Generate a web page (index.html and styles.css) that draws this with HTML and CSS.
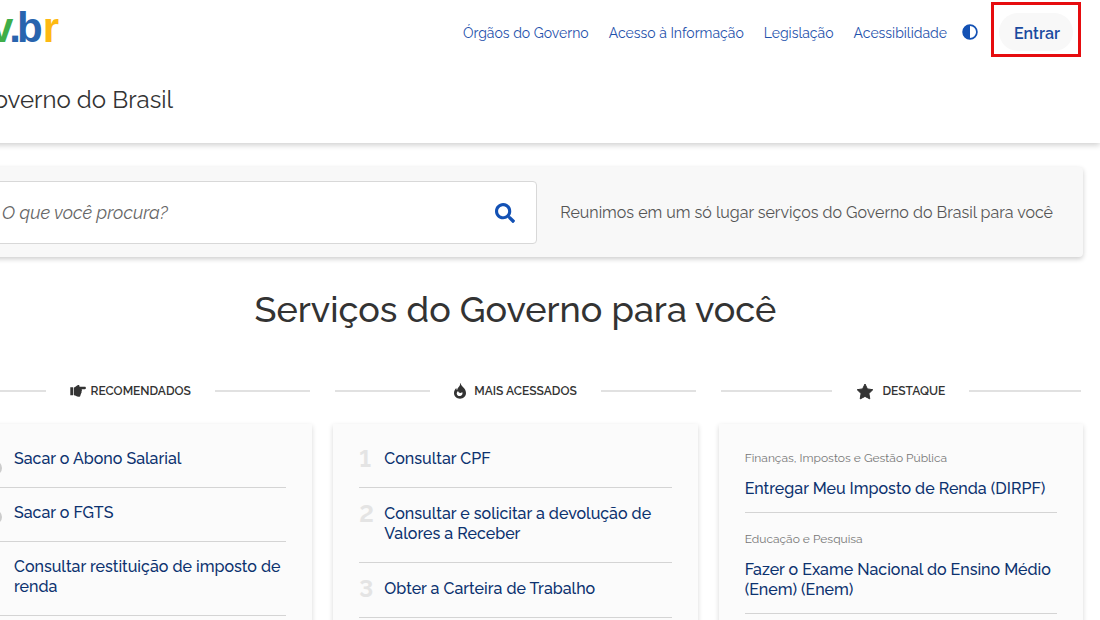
FILE: index.html
```html
<!DOCTYPE html>
<html lang="pt-BR">
<head>
<meta charset="utf-8">
<title>Governo do Brasil</title>
<link rel="stylesheet" href="styles.css">
</head>
<body>
<header class="header">
  <div class="topbar">
    <a class="logo" href="#" aria-label="gov.br"><span class="logo-blue">g</span><span class="logo-yellow">o</span><span class="logo-green">v</span><span class="logo-blue logo-tight">.</span><span class="logo-blue logo-tight">b</span><span class="logo-yellow">r</span></a>
    <nav class="nav">
      <a href="#">Órgãos do Governo</a>
      <a href="#">Acesso à Informação</a>
      <a href="#">Legislação</a>
      <a href="#">Acessibilidade</a>
    </nav>
    <button class="contrast" type="button" aria-label="Alto contraste">
      <svg viewBox="0 0 16 16" width="16" height="16"><circle cx="8" cy="8" r="6.9" fill="none" stroke="#1351b4" stroke-width="1.7"/><path d="M8 1a7 7 0 0 0 0 14z" fill="#1351b4"/></svg>
    </button>
    <div class="highlight"><button class="login" type="button">Entrar</button></div>
  </div>
  <p class="site-name">Governo do Brasil</p>
</header>
<main class="main">
  <section class="search">
    <form class="search-box">
      <input class="search-input" type="text" placeholder="O que você procura?" aria-label="O que você procura?">
      <button class="search-button" type="button" aria-label="Buscar">
        <svg viewBox="0 0 512 512" width="20" height="20"><path fill="#1351b4" d="M505 442.700 405.300 343c-4.500-4.500-10.600-7-17-7H372c27.600-35.300 44-79.700 44-128C416 93.100 322.900 0 208 0S0 93.100 0 208s93.100 208 208 208c48.300 0 92.700-16.400 128-44v16.300c0 6.400 2.500 12.500 7 17l99.700 99.700c9.400 9.400 24.600 9.400 33.900 0l28.300-28.300c9.400-9.400 9.400-24.600.1-34zM208 336c-70.700 0-128-57.200-128-128 0-70.700 57.200-128 128-128 70.700 0 128 57.200 128 128 0 70.700-57.200 128-128 128z"/></svg>
      </button>
    </form>
    <p class="search-text">Reunimos em um só lugar serviços do Governo do Brasil para você</p>
  </section>
  <h1 class="title">Serviços do Governo para você</h1>
  <div class="columns">
    <section class="column">
      <h2 class="column-title">
        <span class="column-label tight"><svg viewBox="0 0 16 12" width="16" height="12"><path fill="#333" d="M.3 2.200h2.500c.3 0 .5.200.5.500v7c0 .3-.2.500-.5.500H.3zM4 2.600C5.600 2.200 6.600.4 8.200.1c1.100-.1 1.600.9 1.200 1.700h5.400c1.500 0 1.500 2.400 0 2.400h-3.300c.8.600.6 1.600-.1 1.900.6.700.3 1.600-.4 1.900.4.700 0 1.500-.6 1.700.2 1.400-.5 2.100-1.700 2.100C6.300 11.800 5.800 10.300 4 10.200z"/></svg>RECOMENDADOS</span>
      </h2>
      <ul class="card recommended">
        <li><svg class="badge" viewBox="0 0 28 28" width="28" height="28"><rect x="0" y="5" width="22" height="14" rx="2" fill="#ddd"/><circle cx="21" cy="19" r="7" fill="#ccc"/></svg><a href="#">Sacar o Abono Salarial</a></li>
        <li><svg class="badge" viewBox="0 0 28 28" width="28" height="28"><rect x="0" y="3" width="22" height="14" rx="2" fill="#ddd"/><circle cx="21" cy="14" r="7" fill="#ccc"/></svg><a href="#">Sacar o FGTS</a></li>
        <li><svg class="badge" viewBox="0 0 28 28" width="28" height="28"><rect x="0" y="5" width="22" height="14" rx="2" fill="#ddd"/></svg><a href="#">Consultar restituição de imposto de renda</a></li>
      </ul>
    </section>
    <section class="column">
      <h2 class="column-title">
        <span class="column-label"><svg viewBox="0 0 12 16" width="12" height="16"><path fill="#333" d="M6.600.3C7 3.700 12 5 12 10c0 3.300-2.600 5.700-6 5.700S0 13.300 0 10c0-2.300 1-3.900 2.300-5.100.1 1 .2 1.500.9 2.100C3.300 4 6.800 3.200 5.900.4zM4 8.100c-1.300 1.300-1.600 2.500-.9 3.700.7 1.300 2.400 1.700 3.900.9 1.500-.8 1.900-2.300 1.100-3.700C7.400 10.700 4.600 10.400 4 8.100z"/></svg>MAIS ACESSADOS</span>
      </h2>
      <ol class="card ranked">
        <li><span class="rank">1</span><a href="#">Consultar CPF</a></li>
        <li><span class="rank">2</span><a href="#">Consultar e solicitar a devolução de Valores a Receber</a></li>
        <li><span class="rank">3</span><a href="#">Obter a Carteira de Trabalho</a></li>
      </ol>
    </section>
    <section class="column">
      <h2 class="column-title">
        <span class="column-label"><svg viewBox="0 0 18 17" width="18" height="17"><path fill="#333" stroke="#333" stroke-linejoin="round" d="m9 1 2.400 4.900 5.400.8-3.900 3.800.9 5.400L9 13.400l-4.800 2.500.9-5.400L1.200 6.700l5.400-.8z"/></svg>DESTAQUE</span>
      </h2>
      <ul class="card featured">
        <li><span class="category">Finanças, Impostos e Gestão Pública</span><a href="#">Entregar Meu Imposto de Renda (DIRPF)</a></li>
        <li><span class="category">Educação e Pesquisa</span><a href="#">Fazer o Exame Nacional do Ensino Médio (Enem) (Enem)</a></li>
      </ul>
    </section>
  </div>
</main>
</body>
</html>
```

FILE: styles.css
```css
* { box-sizing: border-box; }
html { overflow: hidden; }
body {
  margin: 0;
  background: #fff;
  color: #333;
  font-family: Raleway, Lato, sans-serif;
}
a { color: #0c326f; text-decoration: none; }
button { border: 0; background: none; padding: 0; font-family: inherit; cursor: pointer; }
svg { display: block; flex: none; }
p, h1, h2, ul, ol { margin: 0; padding: 0; }
ul, ol { list-style: none; }

.header {
  height: 143px;
  padding: 2px 19px 0 0;
  margin-left: -52px;
  box-shadow: 0 2px 6px rgba(0, 0, 0, .2);
}
.topbar { display: flex; align-items: center; }
.logo {
  width: 111px;
  display: flex;
  justify-content: flex-end;
  margin-right: auto;
  padding-bottom: 4px;
  font: bold 42px/50px "Liberation Sans", Arial, sans-serif;
}
.logo-blue { color: #2864ae; }
.logo-tight { margin-left: -4px; }
.logo-yellow { color: #fdb913; }
.logo-green { color: #3fae49; }
.nav { display: flex; gap: 20px; padding-top: 6px; }
.nav a { color: #1f52ac; font-size: 14px; line-height: 20px; }
.contrast { margin: 0 13px 0 15px; padding-top: 4px; }
.highlight {
  border: 3px solid #e60c0f;
  padding: 8px 5px;
  width: 90px;
  height: 55px;
}
.login {
  width: 100%;
  height: 38px;
  padding: 2px 0 0 2px;
  border-radius: 19px;
  background: #f8f8f8;
  color: #1a4a9f;
  font-size: 16px;
  font-weight: 600;
}
.site-name {
  width: 225px;
  display: flex;
  justify-content: flex-end;
  margin-top: 27px;
  font-size: 24px;
  line-height: 32px;
  white-space: nowrap;
}

.main { margin: 24px 17px 0 -52px; }
.search {
  display: flex;
  align-items: center;
  justify-content: space-between;
  padding: 14px 30px 13px 26px;
  background: #f8f8f8;
  border-radius: 4px;
  box-shadow: 0 2px 5px rgba(0, 0, 0, .2);
}
.search-box {
  display: flex;
  width: 563px;
  height: 63px;
  padding: 0 21px 0 27px;
  background: #fff;
  border: 1px solid #d8d8d8;
  border-radius: 4px;
}
.search-input {
  flex: 1;
  min-width: 0;
  border: 0;
  padding: 0;
  background: none;
  outline: none;
  font: italic 18px/24px Raleway, Lato, sans-serif;
}
.search-input::placeholder { color: #666; opacity: 1; }
.search-text { color: #555; font-size: 16px; line-height: 24px; white-space: nowrap; }

.title {
  margin-top: 30px;
  text-align: center;
  font-size: 36px;
  line-height: 44px;
  font-weight: 500;
}
.columns {
  display: grid;
  grid-template-columns: repeat(3, 1fr);
  gap: 21px;
  margin-top: 49px;
}
.column { display: flex; flex-direction: column; }
.column-title {
  display: flex;
  align-items: center;
  gap: 24px;
  padding: 0 2px;
  font-size: 12px;
  line-height: 22px;
  font-weight: 600;
}
.column-title::before, .column-title::after {
  content: "";
  flex: 1;
  border-top: 2px solid #e1e1e1;
}
.column-label { display: flex; align-items: center; gap: 8px; }
.tight { gap: 5px; }
.card {
  flex: 1;
  margin-top: 22px;
  padding: 10px 26px 20px;
  background: #fbfbfb;
  box-shadow: 0 2px 5px rgba(0, 0, 0, .16);
}
.card li {
  display: flex;
  padding: 15px 0 18px;
  border-bottom: 1px solid #d4d4d4;
  font-size: 16px;
  line-height: 20px;
  font-weight: 500;
}
.recommended li { gap: 12px; }
.badge { margin-bottom: -8px; }
.card.ranked { padding-top: 9px; }
.ranked li { padding-top: 16px; }
.rank {
  flex: none;
  width: 25px;
  color: #e4e4e4;
  font-size: 24px;
  line-height: 20px;
  height: 20px;
  font-weight: 700;
  font-variant-numeric: lining-nums;
}
.card.featured { padding-top: 8px; }
.featured li {
  flex-direction: column;
  gap: 11px;
  padding: 16px 0 13px;
}
.category { color: #777; font-size: 12px; font-weight: 400; }
```
